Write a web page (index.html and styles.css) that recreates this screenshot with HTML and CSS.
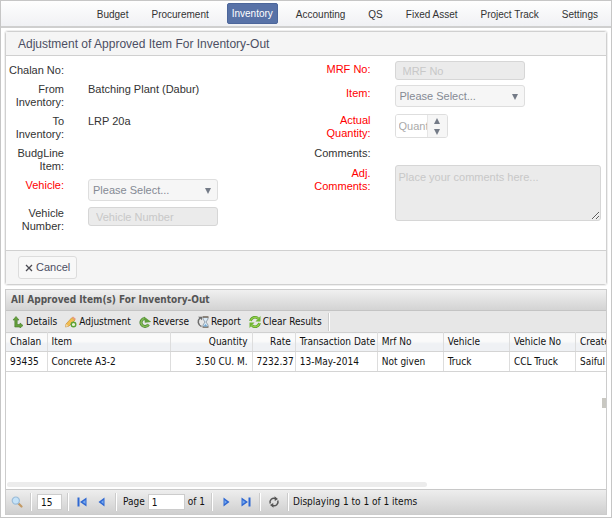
FILE: index.html
```html
<!DOCTYPE html>
<html lang="en">
<head>
<meta charset="utf-8">
<title>Inventory</title>
<link rel="stylesheet" href="styles.css">
</head>
<body>
<nav class="nav">
  <a href="#">Budget</a>
  <a href="#">Procurement</a>
  <a href="#" class="active">Inventory</a>
  <a href="#">Accounting</a>
  <a href="#">QS</a>
  <a href="#">Fixed Asset</a>
  <a href="#">Project Track</a>
  <a href="#">Settings</a>
</nav>
<main class="content">
  <form class="panel">
    <h1 class="panel-title">Adjustment of Approved Item For Inventory-Out</h1>
    <div class="form-body">
      <div class="fields fields-left">
        <span class="label">Chalan No:</span><span></span>
        <span class="label">From Inventory:</span><span class="value">Batching Plant (Dabur)</span>
        <span class="label">To Inventory:</span><span class="value">LRP 20a</span>
        <span class="label">BudgLine Item:</span><span></span>
        <label class="label required" for="vehicle">Vehicle:</label>
        <span class="select">
          <select id="vehicle" disabled><option>Please Select...</option></select>
          <svg class="arrow" viewBox="0 0 6 6"><path d="M0 0h6L3 6z"/></svg>
        </span>
        <label class="label" for="vehicle-number">Vehicle Number:</label>
        <input class="text" id="vehicle-number" type="text" placeholder="Vehicle Number" disabled>
      </div>
      <div class="fields fields-right">
        <label class="label required" for="mrf">MRF No:</label>
        <input class="text" id="mrf" type="text" placeholder="MRF No" disabled>
        <label class="label required" for="item">Item:</label>
        <span class="select">
          <select id="item" disabled><option>Please Select...</option></select>
          <svg class="arrow" viewBox="0 0 6 6"><path d="M0 0h6L3 6z"/></svg>
        </span>
        <label class="label required" for="quantity">Actual Quantity:</label>
        <span class="spinner">
          <input id="quantity" type="text" placeholder="Quantity" disabled>
          <span class="steps">
            <button type="button" aria-label="Increase" disabled><svg viewBox="0 0 6 6"><path d="M0 6h6L3 0z"/></svg></button>
            <button type="button" aria-label="Decrease" disabled><svg viewBox="0 0 6 6"><path d="M0 0h6L3 6z"/></svg></button>
          </span>
        </span>
        <span class="label">Comments:</span><span></span>
        <label class="label required" for="comments">Adj. Comments:</label>
        <textarea id="comments" placeholder="Place your comments here..." disabled></textarea>
      </div>
    </div>
    <div class="form-footer">
      <button type="button" class="cancel"><svg viewBox="0 0 8 8"><path d="M1 1l6 6M7 1L1 7" stroke="#4a4a52" stroke-width="1.3"/></svg>Cancel</button>
    </div>
  </form>

  <section class="grid">
    <h2 class="grid-title">All Approved Item(s) For Inventory-Out</h2>
    <div class="toolbar">
      <button type="button"><svg class="icon" viewBox="0 0 12 12"><path d="M4 .5L1 4h1.800v7H8v1l3-2.500L8 7v1.500H5.200V4H7z" fill="#65a03b" stroke="#477a2b" stroke-width=".6"/></svg>Details</button>
      <button type="button"><svg class="icon" viewBox="0 0 12 12"><path d="M1 8l6-6.500 3 2.500-6 6-3.500 1z" fill="#f2bd4f" stroke="#c78b31" stroke-width=".7"/><path d="M7 1.500L8 .5l3 2.500-1 1z" fill="#e89a80"/><path d="M.5 11L1 8l2.500 2z" fill="#efd9ae"/><circle cx="8.500" cy="8.500" r="2.300" fill="#e8f4d8" stroke="#5da336" stroke-width="1.400"/></svg>Adjustment</button>
      <button type="button"><svg class="icon" viewBox="0 0 12 12"><path d="M9.500 8.500A4 4 0 1 1 6 2.500" fill="none" stroke="#43822d" stroke-width="3"/><path d="M9.500 8.500A4 4 0 1 1 6 2.500" fill="none" stroke="#83b955" stroke-width="1.600"/><path d="M5.500 0v6.500H12z" fill="#609d3d" transform="rotate(-8 8 4)"/></svg>Reverse</button>
      <button type="button"><svg class="icon" viewBox="0 0 12 12"><path d="M4.500 10.500A5 5 0 0 1 3 2" fill="none" stroke="#6d6d6d" stroke-width="1.500"/><path d="M1 .8h4v3.500z" fill="#6d6d6d"/><path d="M6 1h5v2L9 6l2 3v2H6V9l2-3-2-3z" fill="#d9e9f5" stroke="#8291a0" stroke-width=".8"/><path d="M5.500 1h6M5.500 11.200h6" stroke="#7b6f62" stroke-width="1.300"/><path d="M6.500 10.500L8.500 8l2 2.500z" fill="#6fa8d6"/></svg>Report</button>
      <button type="button"><svg class="icon" viewBox="0 0 12 12"><path d="M1.500 5A4.500 4.500 0 0 1 9 2.500M10.500 7A4.500 4.500 0 0 1 3 9.500" fill="none" stroke="#4f9922" stroke-width="2.600"/><path d="M1.500 5A4.500 4.500 0 0 1 9 2.500M10.500 7A4.500 4.500 0 0 1 3 9.500" fill="none" stroke="#95cf4a" stroke-width="1.300"/><path d="M11.500 0v5.500H6.500zM.5 12V6.500h5z" fill="#6eb631"/></svg>Clear Results</button>
      <i class="sep"></i>
    </div>
    <div class="grid-body">
      <table>
        <colgroup><col class="c-chalan"><col class="c-item"><col class="c-qty"><col class="c-rate"><col class="c-date"><col class="c-std"><col class="c-std"><col class="c-std"><col class="c-std"></colgroup>
        <thead><tr><th>Chalan</th><th>Item</th><th class="num">Quantity</th><th class="num">Rate</th><th>Transaction Date</th><th>Mrf No</th><th>Vehicle</th><th>Vehicle No</th><th>Created</th></tr></thead>
        <tbody><tr><td>93435</td><td>Concrete A3-2</td><td class="num">3.50 CU. M.</td><td class="num tight">7232.37</td><td>13-May-2014</td><td>Not given</td><td>Truck</td><td>CCL Truck</td><td>Saiful</td></tr></tbody>
      </table>
      <div class="scroll"></div>
      <div class="handle"></div>
    </div>
    <div class="pager">
      <button type="button" aria-label="Search"><svg class="icon" viewBox="0 0 12 12"><path d="M7.500 7.500l3 3" stroke="#c39a65" stroke-width="2.200" stroke-linecap="round"/><circle cx="4.800" cy="4.600" r="3.600" fill="#c4e2f8" stroke="#9bbcd8" stroke-width="1.200"/></svg></button>
      <i class="sep"></i>
      <input class="size" type="text" value="15" aria-label="Rows per page">
      <i class="sep"></i>
      <button type="button" aria-label="First page"><svg class="icon" viewBox="0 0 12 12"><path d="M1.500 1.500h2v9h-2zM10.500 1.500v9L4 6z" fill="#2f68d2"/><path d="M9.500 4v4L6.500 6z" fill="#77a9f0"/></svg></button>
      <button type="button" aria-label="Previous page"><svg class="icon" viewBox="0 0 12 12"><path d="M8.500 1.500v9L2.500 6z" fill="#2f68d2"/><path d="M7.500 4v4L5 6z" fill="#77a9f0"/></svg></button>
      <i class="sep"></i>
      <label for="page">Page</label>
      <input class="page" id="page" type="text" value="1">
      <span>of 1</span>
      <i class="sep"></i>
      <button type="button" aria-label="Next page"><svg class="icon" viewBox="0 0 12 12"><path d="M3.500 1.500v9l6-4.500z" fill="#2f68d2"/><path d="M4.500 4v4L7 6z" fill="#77a9f0"/></svg></button>
      <button type="button" aria-label="Last page"><svg class="icon" viewBox="0 0 12 12"><path d="M8.500 1.500h2v9h-2zM1.500 1.500v9L8 6z" fill="#2f68d2"/><path d="M2.500 4v4l3-2z" fill="#77a9f0"/></svg></button>
      <i class="sep"></i>
      <button type="button" aria-label="Refresh"><svg class="icon" viewBox="0 0 12 12"><path d="M2.200 7.500A4 4 0 0 1 7.500 2.500M9.800 4.500A4 4 0 0 1 4.500 9.500" fill="none" stroke="#555" stroke-width="1.500"/><path d="M6.500.3L10 3 6.800 5zM5.500 11.700L2 9l3.200-2z" fill="#555"/></svg></button>
      <i class="sep"></i>
      <span class="status">Displaying 1 to 1 of 1 items</span>
    </div>
  </section>
</main>
</body>
</html>
```
FILE: styles.css
```css
* { box-sizing: border-box; }

body {
  display: flex;
  flex-direction: column;
  min-height: 100vh;
  margin: 0;
  border: 1px solid #c6c6c6;
  background: #fff;
  color: #333;
  font: 11px/13px "Liberation Sans", Arial, sans-serif;
}

button, input, select, textarea { margin: 0; font: inherit; color: inherit; }
button { display: inline-flex; align-items: center; padding: 0; border: 0; background: none; }

.nav {
  display: flex;
  justify-content: flex-end;
  align-items: center;
  gap: 13px;
  height: 27px;
  padding-right: 8px;
  border-bottom: 2px solid #cfcfcf;
  background: linear-gradient(#fefefe, #f0f1f4);
  font-size: 10px;
}
.nav a { padding: 4px 5px 3px; border-radius: 2px; color: #333; text-decoration: none; white-space: nowrap; }
.nav .active { border: 1px solid #4c669b; padding: 3px 4px; background: #5872a7; color: #fff; }

.content { display: flex; flex: 1; flex-direction: column; gap: 4px; padding: 3px 4px 2px; }

.panel { border: 1px solid #d0d0d0; border-radius: 3px; box-shadow: 0 0 0 1px #efefef; }
.panel-title {
  margin: 0;
  padding: 5px 12px 4px;
  border-bottom: 1px solid #d0d0d0;
  background: #f5f5f5;
  color: #4c4f63;
  font-size: 12px;
  font-weight: normal;
  line-height: 14px;
}
.form-body { display: grid; grid-template-columns: 1fr 1fr; min-height: 194px; padding: 5px 5px 0 0; }
.fields { display: grid; gap: 6px 24px; align-content: start; }
.fields-left { grid-template-columns: 58px 130px; padding-top: 3px; }
.fields-right { grid-template-columns: 65px 1fr; row-gap: 5px; padding-left: 2px; }
.fields-right .label { padding-top: 2px; }
.label { text-align: right; }
.required { color: #f00; }

.text, textarea {
  border: 1px solid #d6d6d6;
  border-radius: 3px;
  background: #ebebeb;
}
.text { width: 130px; height: 19px; padding: 0 7px; }
.text::placeholder, textarea::placeholder { color: #c8c8c8; }
textarea { display: block; width: 100%; height: 56px; padding: 5px 3px; resize: vertical; }

.select { position: relative; width: 130px; height: 22px; }
.select select {
  width: 100%;
  height: 100%;
  padding: 0 4px;
  border: 1px solid #dedede;
  border-radius: 3px;
  appearance: none;
  background: #f6f6f6;
  color: #858a94;
  opacity: 1;
}
.arrow { position: absolute; top: 9px; right: 7px; width: 6px; height: 6px; fill: #747b87; }

.spinner { display: flex; align-self: center; width: 53px; height: 24px; border: 1px solid #dedede; border-radius: 3px; overflow: hidden; }
.spinner input { width: 31px; padding: 0 0 0 3px; border: 0; background: #fff; }
.spinner input::placeholder { color: #aaa; }
.steps { display: flex; flex: 1; flex-direction: column; border-left: 1px solid #e6e6e6; background: #f6f6f6; }
.steps button { flex: 1; justify-content: center; }
.steps svg { width: 6px; height: 6px; fill: #747b87; }

.form-footer { padding: 5px 12px; border-top: 1px solid #d0d0d0; background: #f5f5f5; }
.cancel {
  gap: 3px;
  height: 23px;
  padding: 0 6px;
  border: 1px solid #dcdcdc;
  border-radius: 3px;
  background: #f8f8f8;
  color: #4c4f63;
}
.cancel svg { width: 8px; height: 8px; }

.grid {
  display: flex;
  flex: 1;
  flex-direction: column;
  border: 1px solid #ccc;
  color: #111;
  font: 10px/12px "DejaVu Sans Condensed", "DejaVu Sans", sans-serif;
}
.grid-title {
  margin: 0;
  padding: 4px 5px;
  border-bottom: 1px solid #c4c4c4;
  background: linear-gradient(#f0f0f0, #d3d3d3);
  color: #555;
  font-size: 10px;
  line-height: 12px;
}
.toolbar { display: flex; align-items: center; gap: 8px; height: 21px; padding: 0 6px; background: #e7e7e7; }
.toolbar button { gap: 2px; white-space: nowrap; }
.icon { width: 12px; height: 12px; }
.sep { width: 2px; height: 18px; border-left: 1px solid #ccc; border-right: 1px solid #fff; }
.toolbar .sep { margin-left: -2px; }

.grid-body { position: relative; flex: 1; overflow: hidden; }
table { width: 636px; border-collapse: collapse; table-layout: fixed; }
.c-chalan { width: 41px; }
.c-item { width: 123px; }
.c-qty { width: 82px; }
.c-rate { width: 43px; }
.c-date { width: 82px; }
.c-std { width: 66px; }
th, td {
  height: 20px;
  padding: 0 0 0 4px;
  border-right: 1px solid #ddd;
  border-bottom: 1px solid #d4d4d4;
  font-weight: normal;
  text-align: left;
  white-space: nowrap;
}
th { height: 19px; border-top: 1px solid #d0d0d0; background: linear-gradient(#fafafa 45%, #eff1f4 55%); }
.num { padding: 0 4px 0 0; text-align: right; }
.tight { padding-right: 1px; }
.scroll { position: absolute; bottom: 2px; left: 1px; width: 70%; height: 5px; border-radius: 3px; background: #ececec; }
.handle { position: absolute; top: 66px; right: 0; width: 4px; height: 10px; background: #c9c8c2; }

.pager {
  display: flex;
  align-items: center;
  gap: 6px;
  height: 25px;
  padding: 0 4px;
  border-top: 1px solid #c8c8c8;
  background: linear-gradient(#eee, #cfcfcf);
}
.pager button { margin: 0 1px; }
.pager input { height: 16px; padding: 0 3px; border: 1px solid #ccc; background: #fff; }
.pager .size { width: 25px; margin: 0 -1px; }
.pager .page { width: 37px; margin: 0 -3px; }
.status { margin-left: -2px; }
```
